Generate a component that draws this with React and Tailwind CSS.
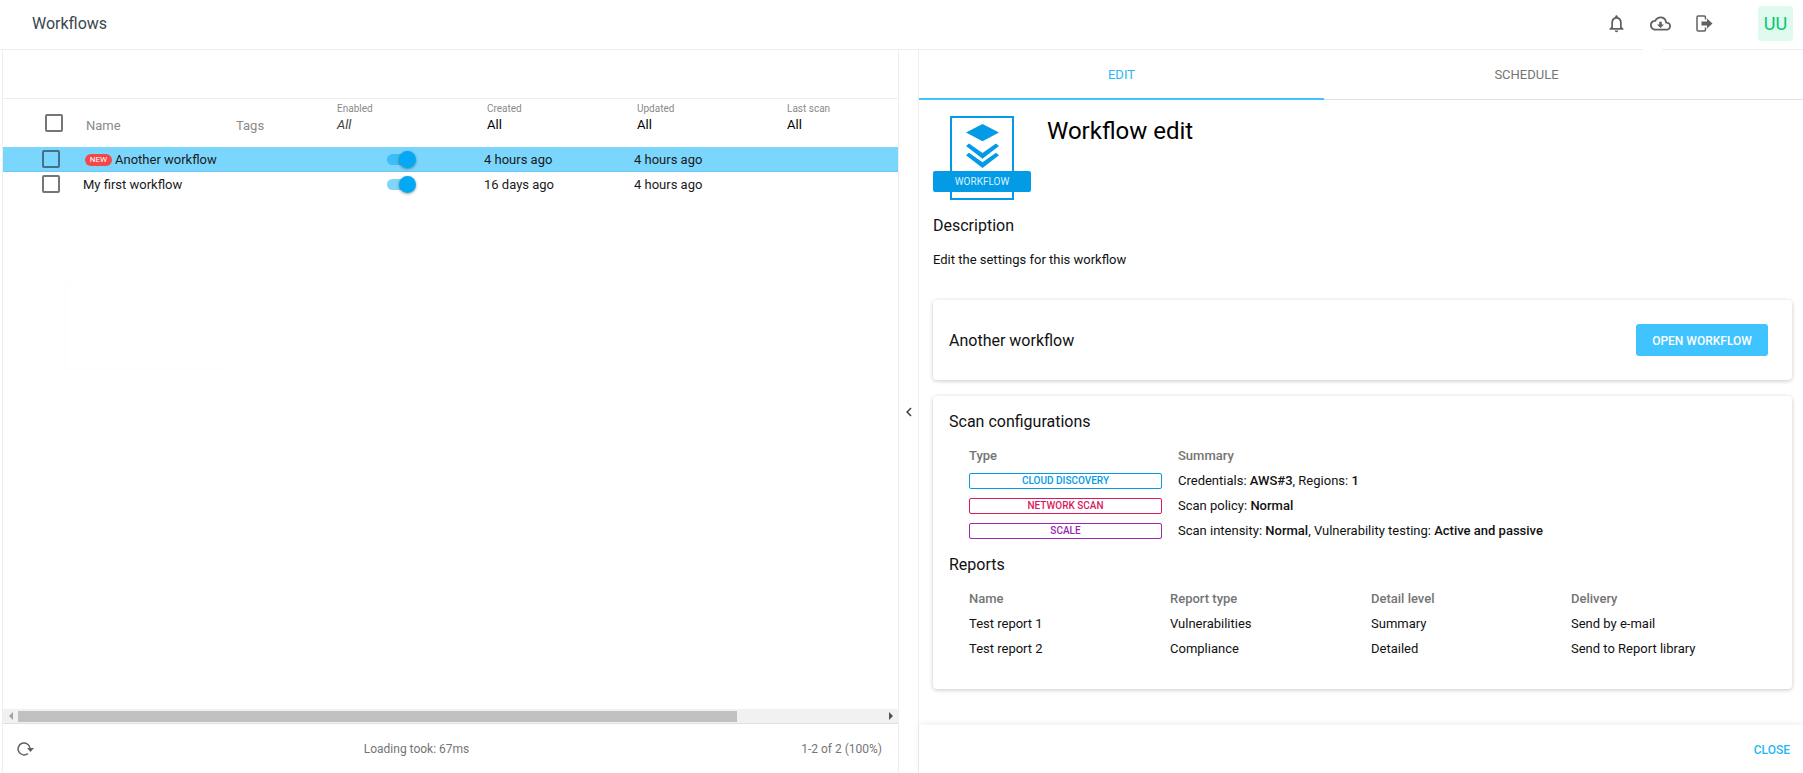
import React from 'react';
import { MdNotificationsNone, MdOutlineCloudDownload, MdChevronLeft } from 'react-icons/md';

function Checkbox({ dark }) {
    return <div className={`w-[18px] h-[18px] rounded-[2px] border-2 ${dark ? 'border-[#44708a]' : 'border-[#757575]'}`}></div>;
}

function Toggle({ track }) {
    return (
        <div className="relative w-[29px] h-[18px]">
            <div className={`absolute left-0 top-[3px] w-[26px] h-[11px] rounded-full ${track}`}></div>
            <div className="absolute right-0 top-0 w-[17px] h-[17px] rounded-full bg-[#03a9f4] shadow-[0_1px_3px_rgba(0,0,0,0.4)]"></div>
        </div>
    );
}

function HeadFilter({ label, value, italic }) {
    return (
        <div className="w-[150px] shrink-0 pt-[4px]">
            <div className="text-[10px] leading-[12px] text-[#8a8a8a]">{label}</div>
            <div className={`mt-[2px] text-[13px] leading-[16px] ${italic ? 'italic text-[#424242]' : 'text-black'}`}>{value}</div>
        </div>
    );
}

function Row({ selected, name, created, updated }) {
    return (
        <div className={`flex items-center h-[25px] text-[13px] text-[#1a1a1a] ${selected ? 'bg-[#7bd6fd] shadow-[inset_0_-1px_0_#6cc8ef]' : ''}`}>
            <div className="w-[80px] shrink-0 pl-[39px] mb-[1px]">
                <Checkbox dark={selected} />
            </div>
            <div className="w-[304px] shrink-0 flex items-center">
                {selected && (
                    <span className="ml-[2px] mr-[3px] w-[27px] h-[12px] rounded-full bg-[#f44848] text-white text-[8px] leading-[12px] text-center">NEW</span>
                )}
                {name}
            </div>
            <div className="w-[97px] shrink-0">
                <Toggle track={selected ? 'bg-[#3dbcf6]' : 'bg-[#81d4fa]'} />
            </div>
            <div className="w-[150px] shrink-0">{created}</div>
            <div className="w-[150px] shrink-0">{updated}</div>
        </div>
    );
}

function Badge({ color, children }) {
    return (
        <div className={`w-[193px] h-[16px] border rounded-[2px] text-[10px] font-medium leading-[13px] text-center ${color}`}>
            {children}
        </div>
    );
}

function LogoutIcon() {
    return (
        <svg width="17" height="17" viewBox="0 0 17 17" fill="none" className="text-[#616161]">
            <path d="M9.5 4.5V2.2C9.5 1.5 9 1 8.3 1H2.2C1.5 1 1 1.5 1 2.2V14.8C1 15.5 1.5 16 2.2 16H8.3C9 16 9.5 15.5 9.5 14.8V12.5" stroke="currentColor" strokeWidth="1.5" />
            <path d="M5.5 6.5H11V3.5L16.5 8.5L11 13.5V10.5H5.5Z" fill="currentColor" />
        </svg>
    );
}

function RefreshIcon() {
    return (
        <svg width="18" height="16" viewBox="0 0 18 16" fill="none" className="text-[#616161]">
            <path d="M13 7A6 6 0 1 0 11 12.5" stroke="currentColor" strokeWidth="1.5" />
            <path d="M10 7H17L13.5 11Z" fill="currentColor" />
        </svg>
    );
}

function WorkflowLogo() {
    return (
        <div className="relative w-[98px] h-[84px]">
            <div className="absolute left-[17px] top-0 w-[64px] h-[84px] border-2 border-[#039be5]">
                <svg width="60" height="52" viewBox="0 0 60 52" className="block">
                    <polygon points="30.5,6 47,14.4 30.5,23.2 14,14.4" fill="#039be5" />
                    <polygon points="14,28 17,25.5 30.5,35 44,25.5 47,28 30.5,40.7" fill="#039be5" />
                    <polygon points="14,37.2 17,34.7 30.5,44.2 44,34.7 47,37.2 30.5,49.9" fill="#039be5" />
                </svg>
            </div>
            <div className="absolute left-0 top-[55px] w-[98px] h-[21px] rounded-[2px] bg-[#039be5] text-[#d9f2ff] text-[10px] leading-[21px] text-center">WORKFLOW</div>
        </div>
    );
}

export default function App() {
    const scanRows = [
        { label: 'CLOUD DISCOVERY', color: 'border-[#039be5] text-[#039be5]', summary: <>Credentials: <b className="font-medium">AWS#3</b>, Regions: <b className="font-medium">1</b></> },
        { label: 'NETWORK SCAN', color: 'border-[#d81b60] text-[#d81b60]', summary: <>Scan policy: <b className="font-medium">Normal</b></> },
        { label: 'SCALE', color: 'border-[#9c27b0] text-[#9c27b0]', summary: <>Scan intensity: <b className="font-medium">Normal</b>, Vulnerability testing: <b className="font-medium">Active and passive</b></> },
    ];
    const reports = [
        ['Test report 1', 'Vulnerabilities', 'Summary', 'Send by e-mail'],
        ['Test report 2', 'Compliance', 'Detailed', 'Send to Report library'],
    ];

    return (
        <div className="w-[1803px] h-[773px] flex flex-col overflow-hidden bg-white font-['Roboto',sans-serif]">
            {/* Top bar */}
            <div className="relative h-[50px] shrink-0 flex items-center border-b border-[#eeeeee]">
                <div className="ml-[32px] -mt-[1px] text-[16px] text-[#37474f]">Workflows</div>
                <div className="ml-auto flex items-center -mt-[3px]">
                    <MdNotificationsNone className="text-[#616161] text-[21px]" />
                    <MdOutlineCloudDownload className="ml-[23px] text-[#616161] text-[21px]" />
                    <div className="ml-[25px]"><LogoutIcon /></div>
                    <div className="ml-[45px] mr-[10px] w-[35px] h-[35px] rounded-[4px] bg-[#e0f9ee] text-[#00c96b] text-[18px] leading-[35px] text-center">UU</div>
                </div>
                <div className="absolute left-[1643px] bottom-[-1px] w-[19px] h-[2px] bg-white"></div>
            </div>

            <div className="flex-1 flex min-h-0 pl-[2px]">
                {/* Table pane */}
                <div className="w-[897px] flex flex-col border-l border-r border-[#eeeeee]">
                    <div className="h-[49px] shrink-0 border-b border-[#eeeeee]"></div>
                    <div className="h-[48px] shrink-0 flex items-start overflow-hidden text-[#8a8a8a]">
                        <div className="w-[83px] shrink-0 pl-[42px] pt-[15px]"><Checkbox /></div>
                        <div className="w-[150px] shrink-0 pt-[19px] text-[13px] leading-[16px]">Name</div>
                        <div className="w-[101px] shrink-0 pt-[19px] text-[13px] leading-[16px]">Tags</div>
                        <HeadFilter label="Enabled" value="All" italic />
                        <HeadFilter label="Created" value="All" />
                        <HeadFilter label="Updated" value="All" />
                        <HeadFilter label="Last scan" value="All" />
                    </div>
                    <div className="relative flex-1 overflow-hidden">
                        <Row selected name="Another workflow" created="4 hours ago" updated="4 hours ago" />
                        <Row name="My first workflow" created="16 days ago" updated="4 hours ago" />
                        {/* leftover of a faded-out menu */}
                        <div className="absolute left-[62px] top-[137px] w-[160px] h-[86px] border-l border-t border-b border-[#fcfcfc]"></div>
                    </div>
                    {/* Horizontal scrollbar */}
                    <div className="h-[14px] shrink-0 flex items-center bg-[#f1f1f1]">
                        <div className="w-[15px] flex justify-center">
                            <div className="border-y-[4px] border-y-transparent border-r-[4px] border-r-[#a3a3a3]"></div>
                        </div>
                        <div className="w-[719px] h-[11px] bg-[#c1c1c1]"></div>
                        <div className="ml-auto w-[14px] flex justify-center">
                            <div className="border-y-[4px] border-y-transparent border-l-[4px] border-l-[#505050]"></div>
                        </div>
                    </div>
                    <div className="relative h-[50px] shrink-0 flex items-center justify-center border-t border-[#e0e0e0] text-[12px] text-[#757575]">
                        <div className="absolute left-[14px] top-[17px]"><RefreshIcon /></div>
                        <div className="translate-x-[-34px]">Loading took: 67ms</div>
                        <div className="absolute right-[16px]">1-2 of 2 (100%)</div>
                    </div>
                </div>

                {/* Collapse gutter */}
                <div className="w-[19px] shrink-0 flex items-center justify-center">
                    <MdChevronLeft className="text-[18px] text-[#424242]" />
                </div>

                {/* Detail pane */}
                <div className="flex-1 flex flex-col min-w-0 border-l border-[#eeeeee]">
                    <div className="h-[50px] shrink-0 flex border-b border-[#e0e0e0] text-[13px]">
                        <div className="relative w-[405px] pt-[1px] flex items-center justify-center text-[#29b6f6]">
                            EDIT
                            <div className="absolute left-0 right-0 bottom-[-1px] h-[2px] bg-[#40c4ff]"></div>
                        </div>
                        <div className="w-[405px] pt-[1px] flex items-center justify-center text-[#757575]">SCHEDULE</div>
                    </div>

                    <div className="flex-1 min-h-0 pl-[14px] pr-[11px] pt-[16px] overflow-hidden">
                        <div className="flex items-start">
                            <WorkflowLogo />
                            <h1 className="ml-[16px] mt-[1px] text-[24px] leading-[28px] text-black">Workflow edit</h1>
                        </div>
                        <h2 className="mt-[14px] text-[16px] leading-[24px] text-[#111]">Description</h2>
                        <p className="mt-[12px] text-[13px] leading-[20px] text-[#111]">Edit the settings for this workflow</p>

                        <div className="mt-[30px] h-[80px] px-[16px] flex items-center justify-between rounded-[4px] bg-white shadow-[0_1px_4px_rgba(0,0,0,0.22)]">
                            <div className="pt-[2px] text-[16px] text-[#111]">Another workflow</div>
                            <button className="mr-[8px] w-[132px] h-[32px] pt-[1px] rounded-[3px] bg-[#40c4ff] text-white text-[12px] font-medium">OPEN WORKFLOW</button>
                        </div>

                        <div className="mt-[16px] h-[293px] pl-[16px] pr-[16px] pt-[14px] rounded-[4px] bg-white shadow-[0_1px_4px_rgba(0,0,0,0.22)]">
                            <div className="text-[16px] leading-[24px] text-[#111]">Scan configurations</div>
                            <div className="mt-[9px] ml-[20px] grid grid-cols-[209px_1fr] auto-rows-[25px] items-center text-[13px] text-[#111]">
                                <div className="font-medium text-[#757575]">Type</div>
                                <div className="font-medium text-[#757575]">Summary</div>
                                {scanRows.map((row) => (
                                    <React.Fragment key={row.label}>
                                        <Badge color={row.color}>{row.label}</Badge>
                                        <div>{row.summary}</div>
                                    </React.Fragment>
                                ))}
                            </div>
                            <div className="mt-[10px] text-[16px] leading-[24px] text-[#111]">Reports</div>
                            <div className="mt-[9px] ml-[20px] grid grid-cols-[201px_201px_200px_1fr] auto-rows-[25px] items-center text-[13px] text-[#111]">
                                <div className="font-medium text-[#757575]">Name</div>
                                <div className="font-medium text-[#757575]">Report type</div>
                                <div className="font-medium text-[#757575]">Detail level</div>
                                <div className="font-medium text-[#757575]">Delivery</div>
                                {reports.map((row) => row.map((cell) => <div key={cell}>{cell}</div>))}
                            </div>
                        </div>
                    </div>

                    <div className="relative h-[48px] shrink-0 flex items-center justify-end pt-[1px] pr-[13px] bg-white shadow-[0_-2px_6px_rgba(0,0,0,0.06)] text-[12px] font-medium text-[#29b6f6]">
                        CLOSE
                    </div>
                </div>
            </div>
        </div>
    );
}
